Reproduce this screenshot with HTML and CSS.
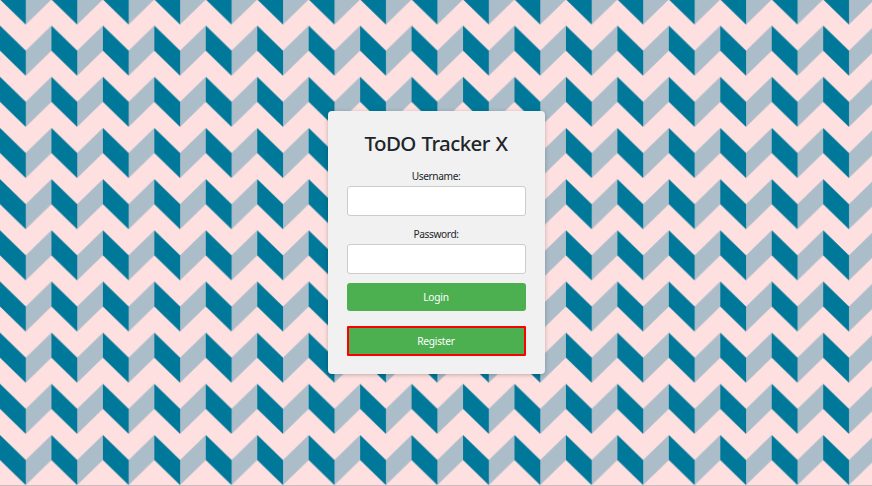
FILE: index.html
```html
<!DOCTYPE html>
<html lang="en">
<head>
<meta charset="utf-8">
<title>ToDO Tracker X</title>
<link rel="stylesheet" href="styles.css">
</head>
<body>
<svg class="backdrop" aria-hidden="true">
  <defs>
    <pattern id="zigzag" width="51.45" height="51.17" y="25.6" patternUnits="userSpaceOnUse">
      <path fill="#abbdc9" d="M25.7 25.2 51.45 0V25L25.7 50.2z"/>
      <path fill="#007899" d="M0 0 25.8 25.2V50.2L0 25z"/>
    </pattern>
  </defs>
  <rect width="100%" height="100%" fill="#ffe0e0"/>
  <rect width="100%" height="100%" fill="url(#zigzag)"/>
</svg>
<main class="page">
  <form class="card">
    <h1 class="title">ToDO Tracker X</h1>
    <label class="label" for="username">Username:</label>
    <input class="field" id="username" type="text">
    <label class="label" for="password">Password:</label>
    <input class="field" id="password" type="password">
    <button class="button" type="button">Login</button>
    <button class="button register" type="button">Register</button>
  </form>
</main>
</body>
</html>
```
FILE: styles.css
```css
* { box-sizing: border-box; }
body {
  margin: 0;
  height: 486px;
  overflow: hidden;
  background: #ffe0e0;
  color: #212529;
  font-family: "Noto Sans", "Open Sans", sans-serif;
}
.backdrop {
  position: absolute;
  inset: 0;
  width: 100%;
  height: 100%;
}
.page {
  position: relative;
  height: 486px;
  display: flex;
  justify-content: center;
  align-items: flex-start;
  padding-top: 111px;
  border-bottom: 1px solid #cbbcbf;
}
.card {
  width: 217px;
  height: 263px;
  padding: 18px 19px 0;
  border-radius: 4px;
  background: #f1f1f1;
  box-shadow: 0 1px 4px rgba(0, 0, 0, 0.25);
  display: flex;
  flex-direction: column;
  text-align: center;
}
.title {
  margin: 0 0 10px;
  font-size: 20.5px;
  line-height: 28px;
  font-weight: 500;
  letter-spacing: -0.6px;
  word-spacing: 1px;
  white-space: nowrap;
}
.label {
  height: 19px;
  font-size: 10.2px;
  line-height: 18px;
  letter-spacing: -0.4px;
}
.field {
  width: 179px;
  height: 30px;
  margin: 0 0 9px;
  border: 1px solid #ccc;
  border-radius: 3px;
  background: #fff;
}
.button {
  width: 179px;
  height: 28px;
  flex: none;
  padding: 0;
  border: 0;
  border-radius: 3px;
  background: #4caf50;
  color: #fff;
  font: 10.2px/28px "Noto Sans", "Open Sans", sans-serif;
  letter-spacing: -0.25px;
}
.register {
  height: 30px;
  margin-top: 15px;
  border: 2px solid #f00;
  border-radius: 1px;
  line-height: 25px;
}
```
